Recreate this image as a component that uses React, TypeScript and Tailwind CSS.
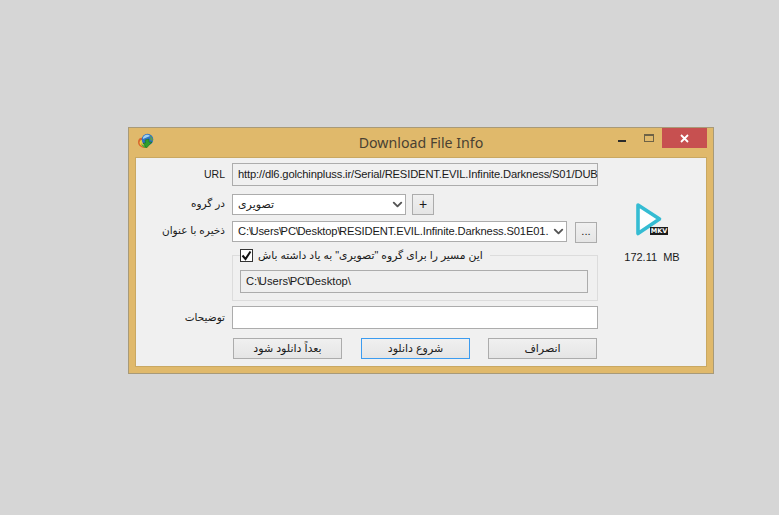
import { ChevronDown } from 'lucide-react'

const ui = "font-['Liberation_Sans','DejaVu_Sans',sans-serif] text-[11.2px] text-[#1a1a1a]"

function Logo() {
  return (
    <svg width="18" height="17" viewBox="0 0 18 17">
      <path d="M1 9 C1 5 4 4 7 5 L7 8 C5 7 3.5 8 4 10 C5 12 7 13 9 13 L9 15 C5 15 1 13 1 9Z" fill="#d9662e" />
      <path d="M2.5 9.5 C3 7 5 6.5 7 7 L7 8.5 C5.5 8 4 9 4.5 10.5 C5.5 12 7 12.5 9 13 L8 14 C5 13.5 2.5 12 2.5 9.5Z" fill="#e9d23c" />
      <path d="M4 10.5 C5 12 7 12.5 9 13 L9 15 C6.5 14.5 4.5 13 4 10.5Z" fill="#3fae3a" />
      <circle cx="10.5" cy="6.5" r="5.8" fill="#2f74c6" />
      <path d="M7 3 C9 1 12 1.5 13 3 C11 4 8 5 6 6 C5.8 5 6 4 7 3Z" fill="#9fd0f0" />
      <path d="M13 2.5 C15 4 16 6 16 8 L13.5 7 C13.5 5.5 13 4 13 2.5Z" fill="#5f9f4a" />
      <path d="M8 7 L12 6 L12 9 L15 9 L9.5 15 L6 10 L8.5 10Z" fill="#2f9d2f" stroke="#14651a" strokeWidth="0.5" />
    </svg>
  )
}

function MkvIcon() {
  return (
    <div className="relative w-[32px] h-[33px]">
      <svg width="26" height="33" viewBox="0 0 26 33">
        <path d="M2 2 L23.5 16 L2 30.5 Z" fill="#ffffff" stroke="#35bcd3" strokeWidth="3.6" strokeLinejoin="round" />
      </svg>
      <span className="absolute right-0 bottom-[1px] w-[18px] h-[8px] bg-[#1c1c1c] text-white text-center font-['DejaVu_Sans',sans-serif] font-bold text-[6.5px] leading-[8px]">MKV</span>
    </div>
  )
}

// windows paths in the reference have very tight backslashes
function PathText({ value }: { value: string }) {
  const parts = value.split('\\')
  return (
    <>
      {parts.map((part, i) => (
        <span key={i}>
          {part}
          {i < parts.length - 1 && <span className="tracking-[-1.5px]">\</span>}
        </span>
      ))}
    </>
  )
}

function Field({ label, children, className }: { label?: string; children: React.ReactNode; className?: string }) {
  return (
    <div className={`flex items-center ${className ?? ''}`}>
      <label dir="rtl" className="w-[90px] pr-[7px] text-right shrink-0 whitespace-nowrap text-[10.5px]">
        {label}
      </label>
      {children}
    </div>
  )
}

function Button({ children, primary }: { children: React.ReactNode; primary?: boolean }) {
  return (
    <button
      dir="rtl"
      className={`w-[109px] h-[21px] border flex items-center justify-center bg-linear-to-b from-[#f0f0f0] to-[#e5e5e5] text-[11px] ${
        primary ? 'border-[#3c9cf0]' : 'border-[#acacac]'
      }`}
    >
      {children}
    </button>
  )
}

export default function App() {
  return (
    <div className={`min-h-[515px] bg-[#d6d6d6] pt-[127px] pl-[128px] ${ui}`}>
      {/* Window */}
      <div className="w-[586px] h-[247px] border border-[#a89a78] bg-[#e0b96b] flex flex-col">
        <div className="h-[29px] shrink-0 relative flex items-center justify-center">
          <div className="absolute left-[8px] top-[5px]">
            <Logo />
          </div>
          <span className="font-['Noto_Sans',sans-serif] text-[14.2px] text-[#4a4132] pt-[1px]">Download File Info</span>
          <div className="absolute top-0 right-[6px] flex items-start">
            <div className="w-[8px] h-[2px] bg-[#2b2b2b] mt-[12px] mr-[18px]" />
            <div className="w-[10px] h-[8px] border border-[#6e6246] border-t-2 mt-[6px] mr-[8px]" />
            <div className="w-[45px] h-[20px] bg-[#c75050] flex items-center justify-center">
              <svg width="9" height="9" viewBox="0 0 9 9">
                <path d="M1 1 L8 8 M8 1 L1 8" stroke="#fff" strokeWidth="1.8" />
              </svg>
            </div>
          </div>
        </div>

        {/* Panel */}
        <div className="mx-[6px] mb-[6px] flex-1 border border-[#c9a862] bg-[#f0f0f0] flex">
          <div className="w-[462px] pl-[6px] pt-[5px]">
            <Field label="URL" className="h-[23px]">
              <div className="w-[366px] h-[23px] border border-[#acacac] bg-[#f0f0f0] pl-[5px] flex items-center whitespace-nowrap tracking-[-0.15px]">
                http://dl6.golchinpluss.ir/Serial/RESIDENT.EVIL.Infinite.Darkness/S01/DUB
              </div>
            </Field>

            <Field label="در گروه" className="h-[22px] mt-[7px]">
              <div className="w-[174px] h-[21px] border border-[#acacac] bg-white pl-[5px] flex items-center justify-between">
                <span dir="rtl" className="text-[11px]">تصویری</span>
                <ChevronDown size={15} strokeWidth={3} className="text-[#555]" />
              </div>
              <button className="w-[22px] h-[21px] ml-[6px] border border-[#acacac] bg-linear-to-b from-[#f0f0f0] to-[#e5e5e5] flex items-center justify-center text-[14px] leading-none">
                +
              </button>
            </Field>

            <Field label="ذخیره با عنوان" className="h-[22px] mt-[5px]">
              <div className="w-[335px] h-[21px] shrink-0 border border-[#acacac] bg-white pl-[5px] flex items-center justify-between">
                <span className="whitespace-nowrap tracking-[-0.15px]">
                  <PathText value="C:\Users\PC\Desktop\RESIDENT.EVIL.Infinite.Darkness.S01E01." />
                </span>
                <ChevronDown size={15} strokeWidth={3} className="text-[#555] shrink-0" />
              </div>
              <button className="w-[22px] h-[21px] shrink-0 ml-[8px] mt-[2px] border border-[#acacac] bg-linear-to-b from-[#f0f0f0] to-[#e5e5e5] flex items-center justify-center leading-none">
                ...
              </button>
            </Field>

            <fieldset className="ml-[90px] w-[366px] h-[53px] mt-[6px] border border-[#dcdcdc] px-[7px]">
              <legend className="flex items-center h-[14px] pr-[7px]">
                <span className="w-[13px] h-[13px] border border-[#333] bg-white flex items-center justify-center">
                  <svg width="11" height="11" viewBox="0 0 11 11">
                    <path d="M1.5 5.5 L4.5 9 L9.5 1.5" fill="none" stroke="#111" strokeWidth="2" />
                  </svg>
                </span>
                <span dir="rtl" className="ml-[5px] text-[10.8px] whitespace-nowrap">
                  این مسیر را برای گروه "تصویری" به یاد داشته باش
                </span>
              </legend>
              <div className="w-[348px] h-[23px] mt-[8px] border border-[#acacac] bg-[#efefef] pl-[5px] flex items-center">
                <span>
                  <PathText value="C:\Users\PC\Desktop\" />
                </span>
              </div>
            </fieldset>

            <Field label="توضیحات" className="h-[23px] mt-[5px]">
              <div className="w-[366px] h-[23px] border border-[#acacac] bg-white" />
            </Field>

            <div className="ml-[91px] mt-[9px] flex">
              <Button>بعداً دانلود شود</Button>
              <div className="ml-[19px]">
                <Button primary>شروع دانلود</Button>
              </div>
              <div className="ml-[18px]">
                <Button>انصراف</Button>
              </div>
            </div>
          </div>

          {/* File info */}
          <div className="flex-1 flex flex-col items-center pt-[45px]">
            <MkvIcon />
            <span className="mt-[13px] text-[11px] whitespace-nowrap">172.11&nbsp; MB</span>
          </div>
        </div>
      </div>
    </div>
  )
}
